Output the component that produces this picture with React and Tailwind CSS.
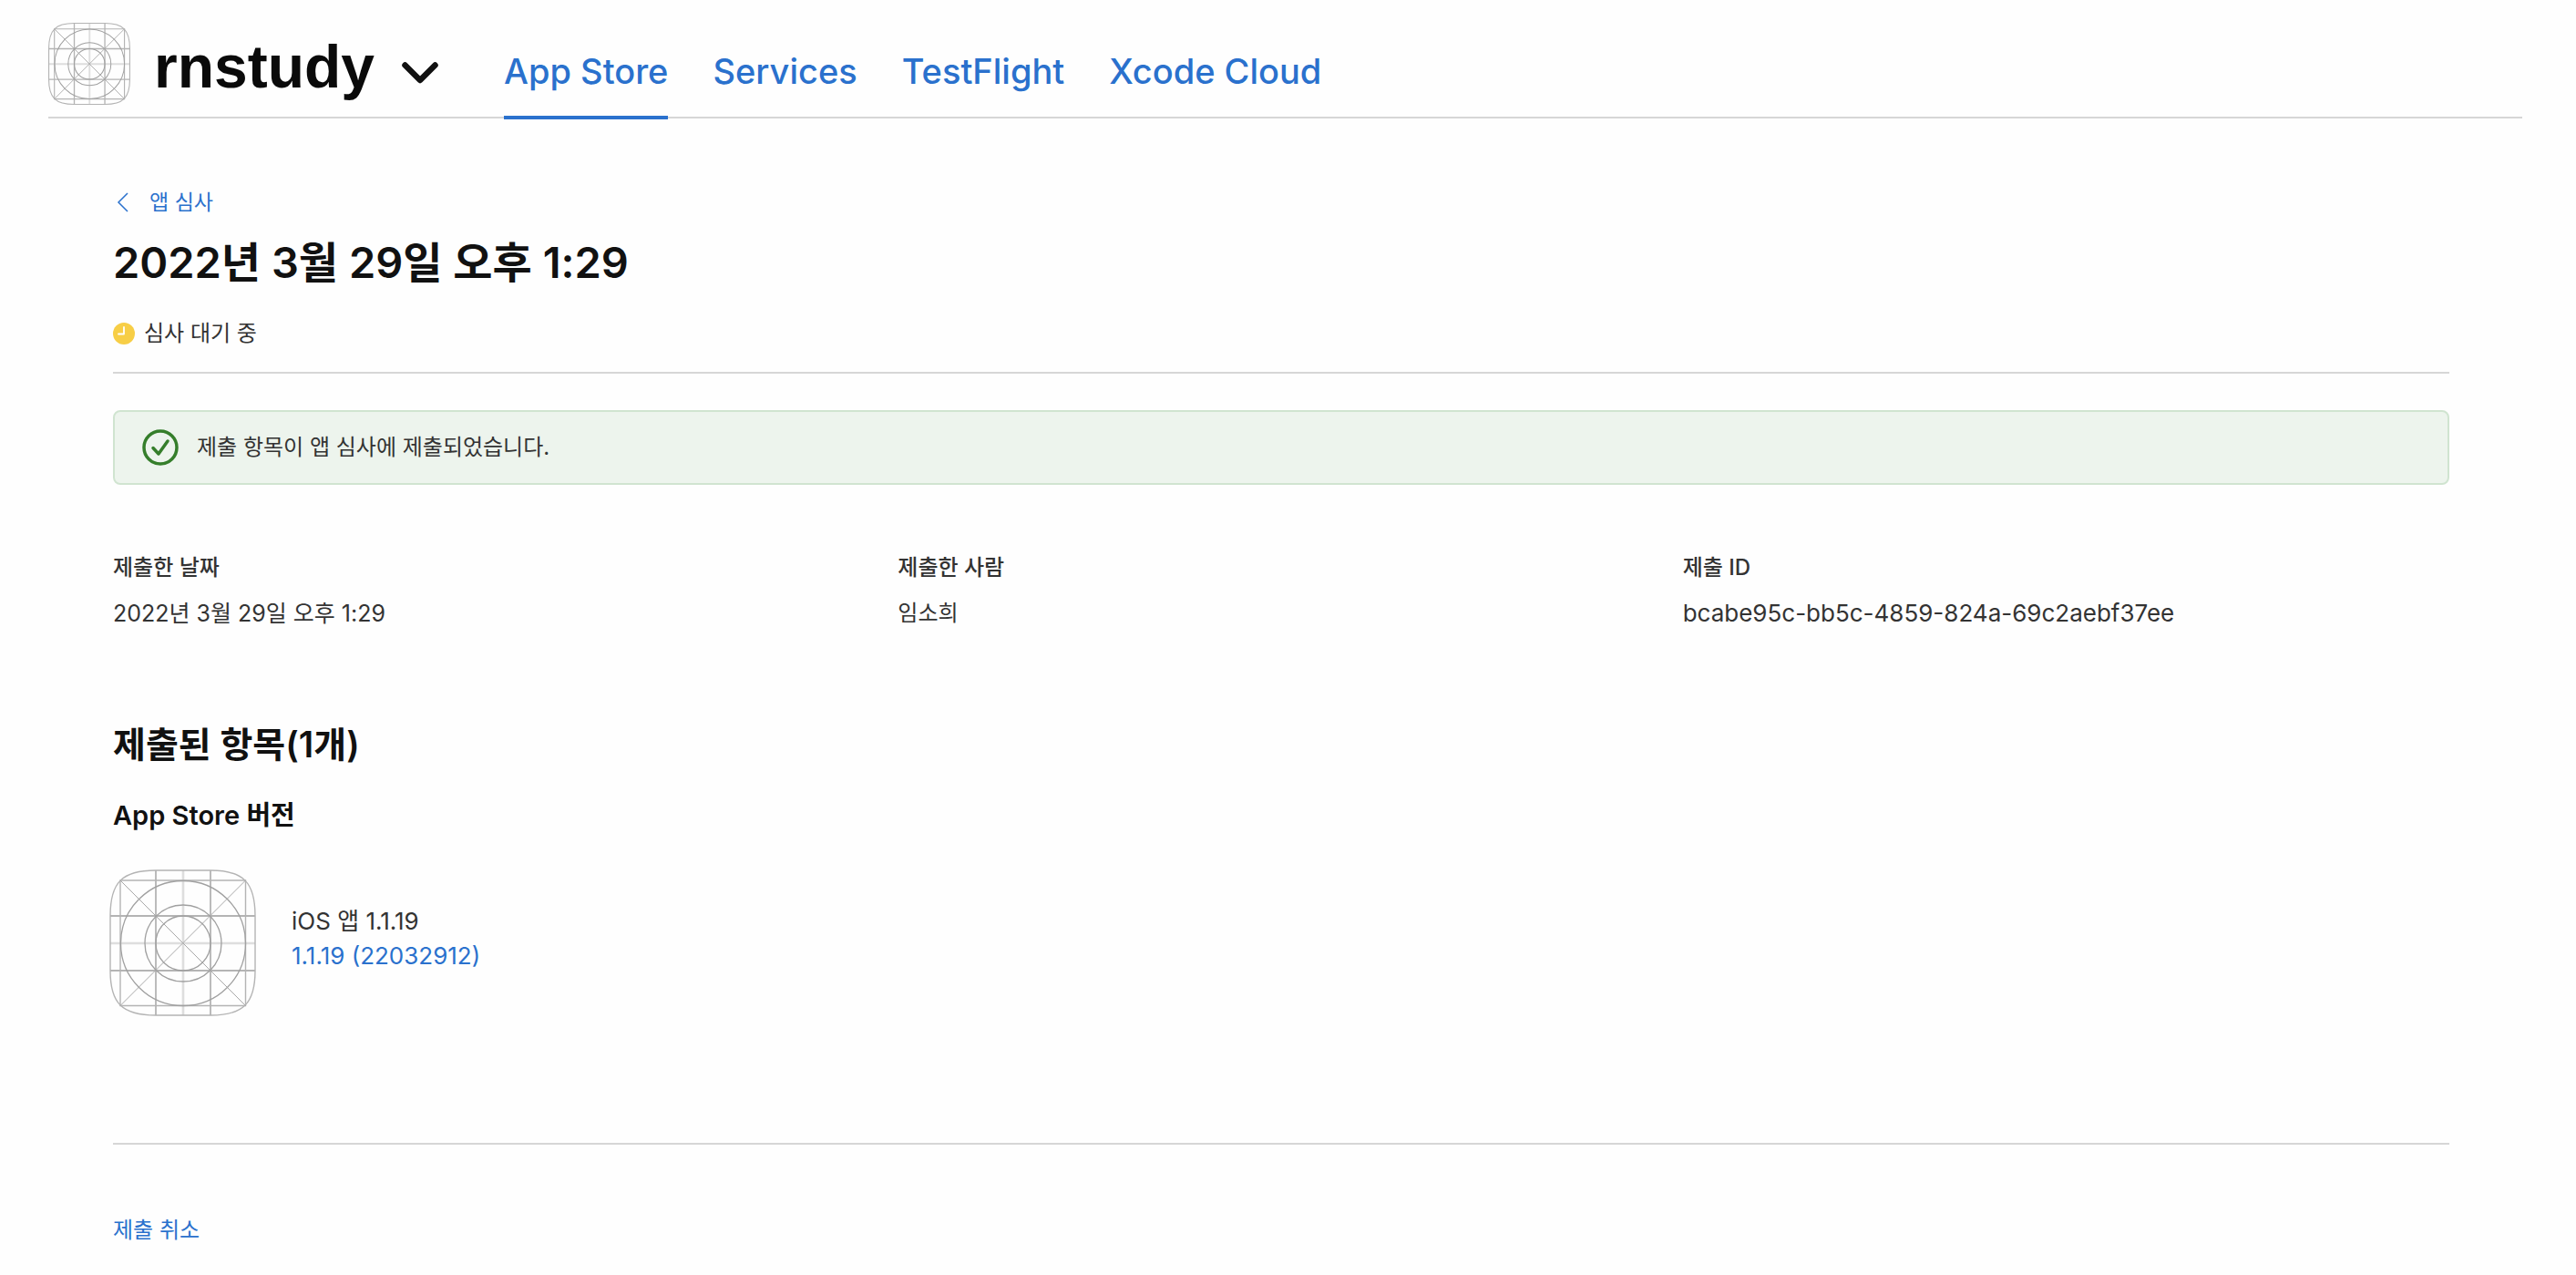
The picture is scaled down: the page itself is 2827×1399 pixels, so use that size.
const navItems = ["App Store", "Services", "TestFlight", "Xcode Cloud"];

const details = [
  { label: "제출한 날짜", value: "2022년 3월 29일 오후 1:29", size: "text-[25px]" },
  { label: "제출한 사람", value: "임소희", size: "text-[24px]" },
  { label: "제출 ID", value: "bcabe95c-bb5c-4859-824a-69c2aebf37ee", size: "text-[26px]" },
];

const OUTLINE =
  "M51 1H111C147 1 160 14 160 51V111C160 147 147 160 111 160H51C14 160 1 147 1 111V51C1 14 14 1 51 1Z";

/* Placeholder app icon: the icon design grid */
function AppIconGrid({ className, thin }) {
  return (
    <svg viewBox="0 0 161 161" className={className} fill="none" aria-hidden="true">
      <g stroke="#dedede" strokeWidth={thin ? 3.4 : 2.6}>
        <path d="M81 1V160M1 81H160" />
      </g>
      <g stroke="#b4b4b4" strokeWidth={thin ? 2 : 1.4}>
        <path d="M12 12H149.500V149.500H12Z" />
        <path d="M51 1V160M111 1V160M1 51H160M1 111H160" strokeWidth={thin ? 2.4 : 1.8} />
        <path d={OUTLINE} />
      </g>
      <g stroke="#a8a8a8" strokeWidth={thin ? 1.6 : 1}>
        <path d="M12 12L149.500 149.500M149.500 12L12 149.500" />
      </g>
      <g stroke="#a0a0a0" strokeWidth={thin ? 1.8 : 1.3}>
        <circle cx="81" cy="81" r="68.500" />
        <circle cx="81" cy="81" r="42" />
        <circle cx="81" cy="81" r="30" />
      </g>
    </svg>
  );
}

export default function App() {
  return (
    <div className="min-h-screen bg-[#fefefe] font-['Inter','Noto_Sans_CJK_KR',sans-serif] text-[#333333]">
      <header className="ml-[53px] mr-[59px] flex h-[130px] border-b-2 border-[#d6d6d6]">
        <AppIconGrid className="mt-[25px] size-[90px] shrink-0" thin />
        <button
          type="button"
          className="ml-[26px] mt-[30px] flex h-[86px] shrink-0 items-center gap-[30px] text-[#0a0a0a]"
        >
          <span className="font-['Liberation_Sans',sans-serif] text-[66px] leading-[86px] font-bold">
            rnstudy
          </span>
          <svg viewBox="0 0 40 24" className="mt-[13px] h-6 w-10" fill="none" aria-hidden="true">
            <path
              d="M3.500 3.500L20 20L36.500 3.500"
              stroke="#111"
              strokeWidth="6.500"
              strokeLinecap="round"
              strokeLinejoin="round"
            />
          </svg>
        </button>
        <nav className="ml-[72px] flex h-[131px] shrink-0 gap-[49px]">
          {navItems.map((item, i) => (
            <a
              key={item}
              href="#"
              aria-current={i === 0 ? "page" : undefined}
              className={
                "border-b-4 pt-[53px] text-[38px] leading-[50px] font-medium whitespace-nowrap text-[#2a71cd] " +
                (i === 0 ? "border-[#2a71cd]" : "border-transparent")
              }
            >
              {item}
            </a>
          ))}
        </nav>
      </header>

      <main className="pr-[139px] pl-[124px] pt-[76px] pb-8">
        <a href="#" className="flex h-8 w-fit items-center gap-[22px] text-[23px] leading-8 text-[#2a71cd]">
          <svg viewBox="0 0 14 24" className="ml-1 h-6 w-3.5" fill="none" aria-hidden="true">
            <path d="M12 2L2 12L12 22" stroke="#2a71cd" strokeWidth="1.500" />
          </svg>
          앱 심사
        </a>
        <h1 className="mt-5 text-[47px] leading-[60px] font-semibold text-[#111]">
          2022년 3월 29일 오후 1:29
        </h1>
        <div className="mt-[30px] flex h-[62px] items-start gap-2.5 border-b-2 border-[#d6d6d6] text-[24px] leading-9">
          <svg viewBox="0 0 24 24" className="mt-1.5 size-6" fill="none" aria-hidden="true">
            <circle cx="12" cy="12" r="12" fill="#f7ce46" />
            <path
              d="M12 5V12.500H6"
              stroke="#fff"
              strokeWidth="1.800"
              strokeLinecap="round"
              strokeLinejoin="round"
            />
          </svg>
          <span>심사 대기 중</span>
        </div>

        <div
          role="status"
          className="mt-10 flex h-[82px] items-center gap-5 rounded-lg border-2 border-[#d0e4d0] bg-[#edf4ed] pl-[30px] text-[24px]"
        >
          <svg viewBox="0 0 40 40" className="size-10" fill="none" aria-hidden="true">
            <circle cx="20" cy="20" r="18" stroke="#357e2b" strokeWidth="3.500" />
            <path
              d="M12 20.500L18 27L28 13"
              stroke="#357e2b"
              strokeWidth="3.500"
              strokeLinecap="round"
              strokeLinejoin="round"
            />
          </svg>
          <span>제출 항목이 앱 심사에 제출되었습니다.</span>
        </div>

        <dl className="mt-[75px] grid grid-cols-3 gap-5">
          {details.map((d) => (
            <div key={d.label}>
              <dt className="text-[24px] leading-8 font-medium">{d.label}</dt>
              <dd className={"mt-4 leading-9 " + d.size}>{d.value}</dd>
            </div>
          ))}
        </dl>

        <h2 className="mt-[98px] text-[39px] leading-[56px] font-semibold text-[#111]">
          제출된 항목(1개)
        </h2>
        <h3 className="mt-[30px] text-[29px] leading-10 font-semibold text-[#111]">App Store 버전</h3>
        <div className="mt-[39px] -ml-1 flex items-center gap-[39px]">
          <AppIconGrid className="size-[161px]" />
          <div className="pb-2.5 text-[26px] leading-[38px]">
            <p>iOS 앱 1.1.19</p>
            <a href="#" className="text-[#2a71cd]">
              1.1.19 (22032912)
            </a>
          </div>
        </div>

        <hr className="mt-[139px] border-t-2 border-[#d6d6d6]" />
        <button type="button" className="mt-[78px] block text-[24px] leading-8 text-[#2a71cd]">
          제출 취소
        </button>
      </main>
    </div>
  );
}
